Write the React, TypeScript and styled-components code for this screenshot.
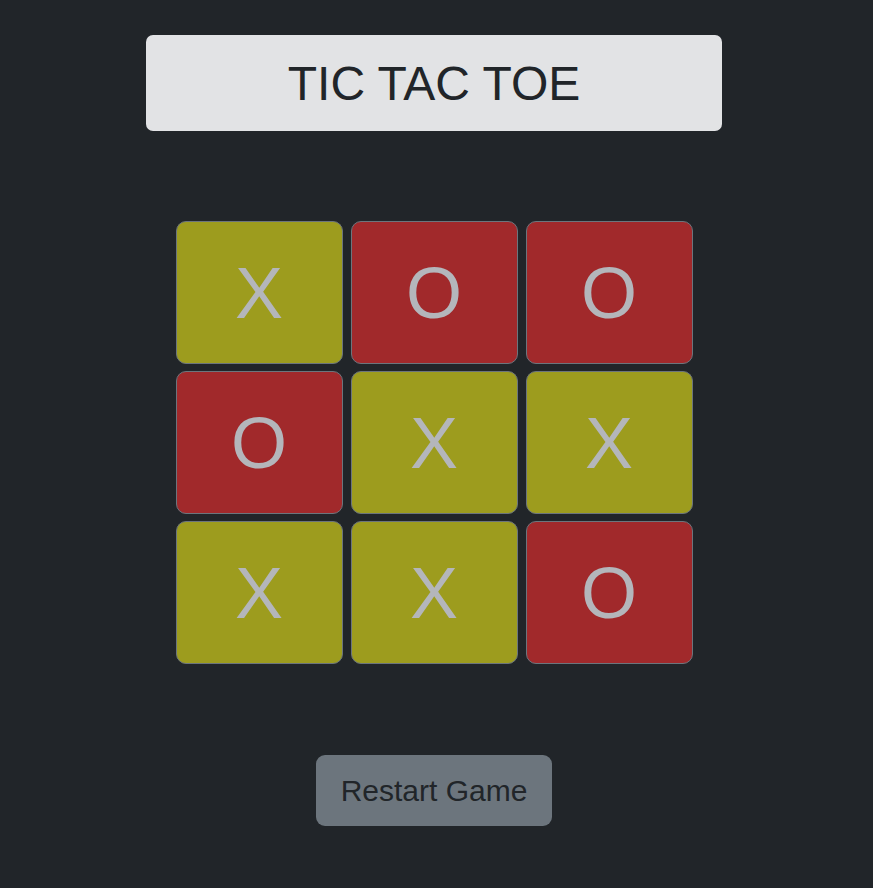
import React from "react";
import styled, { createGlobalStyle } from "styled-components";

const Global = createGlobalStyle`
  html, body {
    margin: 0;
    padding: 0;
    background: #212529;
  }
  body {
    font-family: "Liberation Sans", Arial, sans-serif;
  }
`;

const Page = styled.div`
  min-height: 888px;
  display: flex;
  flex-direction: column;
  align-items: center;
  padding: 35px 5px 0 0;
  box-sizing: border-box;
`;

const Title = styled.h1`
  margin: 0;
  width: 576px;
  height: 96px;
  box-sizing: border-box;
  background: #e2e3e5;
  color: #212529;
  border-radius: 7px;
  display: flex;
  align-items: center;
  justify-content: center;
  font-weight: 400;
  font-size: 48px;
`;

const Board = styled.div`
  margin-top: 90px;
  display: grid;
  grid-template-columns: repeat(3, 167px);
  grid-auto-rows: 143px;
  gap: 7px 8px;
`;

const Cell = styled.button<{ $mark: "X" | "O" }>`
  box-sizing: border-box;
  border: 1px solid #6c757d;
  border-radius: 10px;
  background: ${(p) => (p.$mark === "X" ? "#9d9c1e" : "#a1292b")};
  color: #b4b6bb;
  font-family: "Liberation Sans", Arial, sans-serif;
  font-size: 72px;
  display: flex;
  align-items: center;
  justify-content: center;
  padding: 0;
  cursor: pointer;
`;

const Restart = styled.button`
  margin-top: 91px;
  background: #6c757d;
  color: #212529;
  border: none;
  border-radius: 9px;
  padding: 13px 25px;
  font-family: "Liberation Sans", Arial, sans-serif;
  font-size: 30px;
  line-height: 45px;
  cursor: pointer;
`;

const board: ("X" | "O")[] = ["X", "O", "O", "O", "X", "X", "X", "X", "O"];

export default function App() {
  return (
    <>
      <Global />
      <Page>
        <Title>TIC TAC TOE</Title>
        <Board>
          {board.map((m, i) => (
            <Cell key={i} $mark={m}>
              {m}
            </Cell>
          ))}
        </Board>
        <Restart>Restart Game</Restart>
      </Page>
    </>
  );
}
